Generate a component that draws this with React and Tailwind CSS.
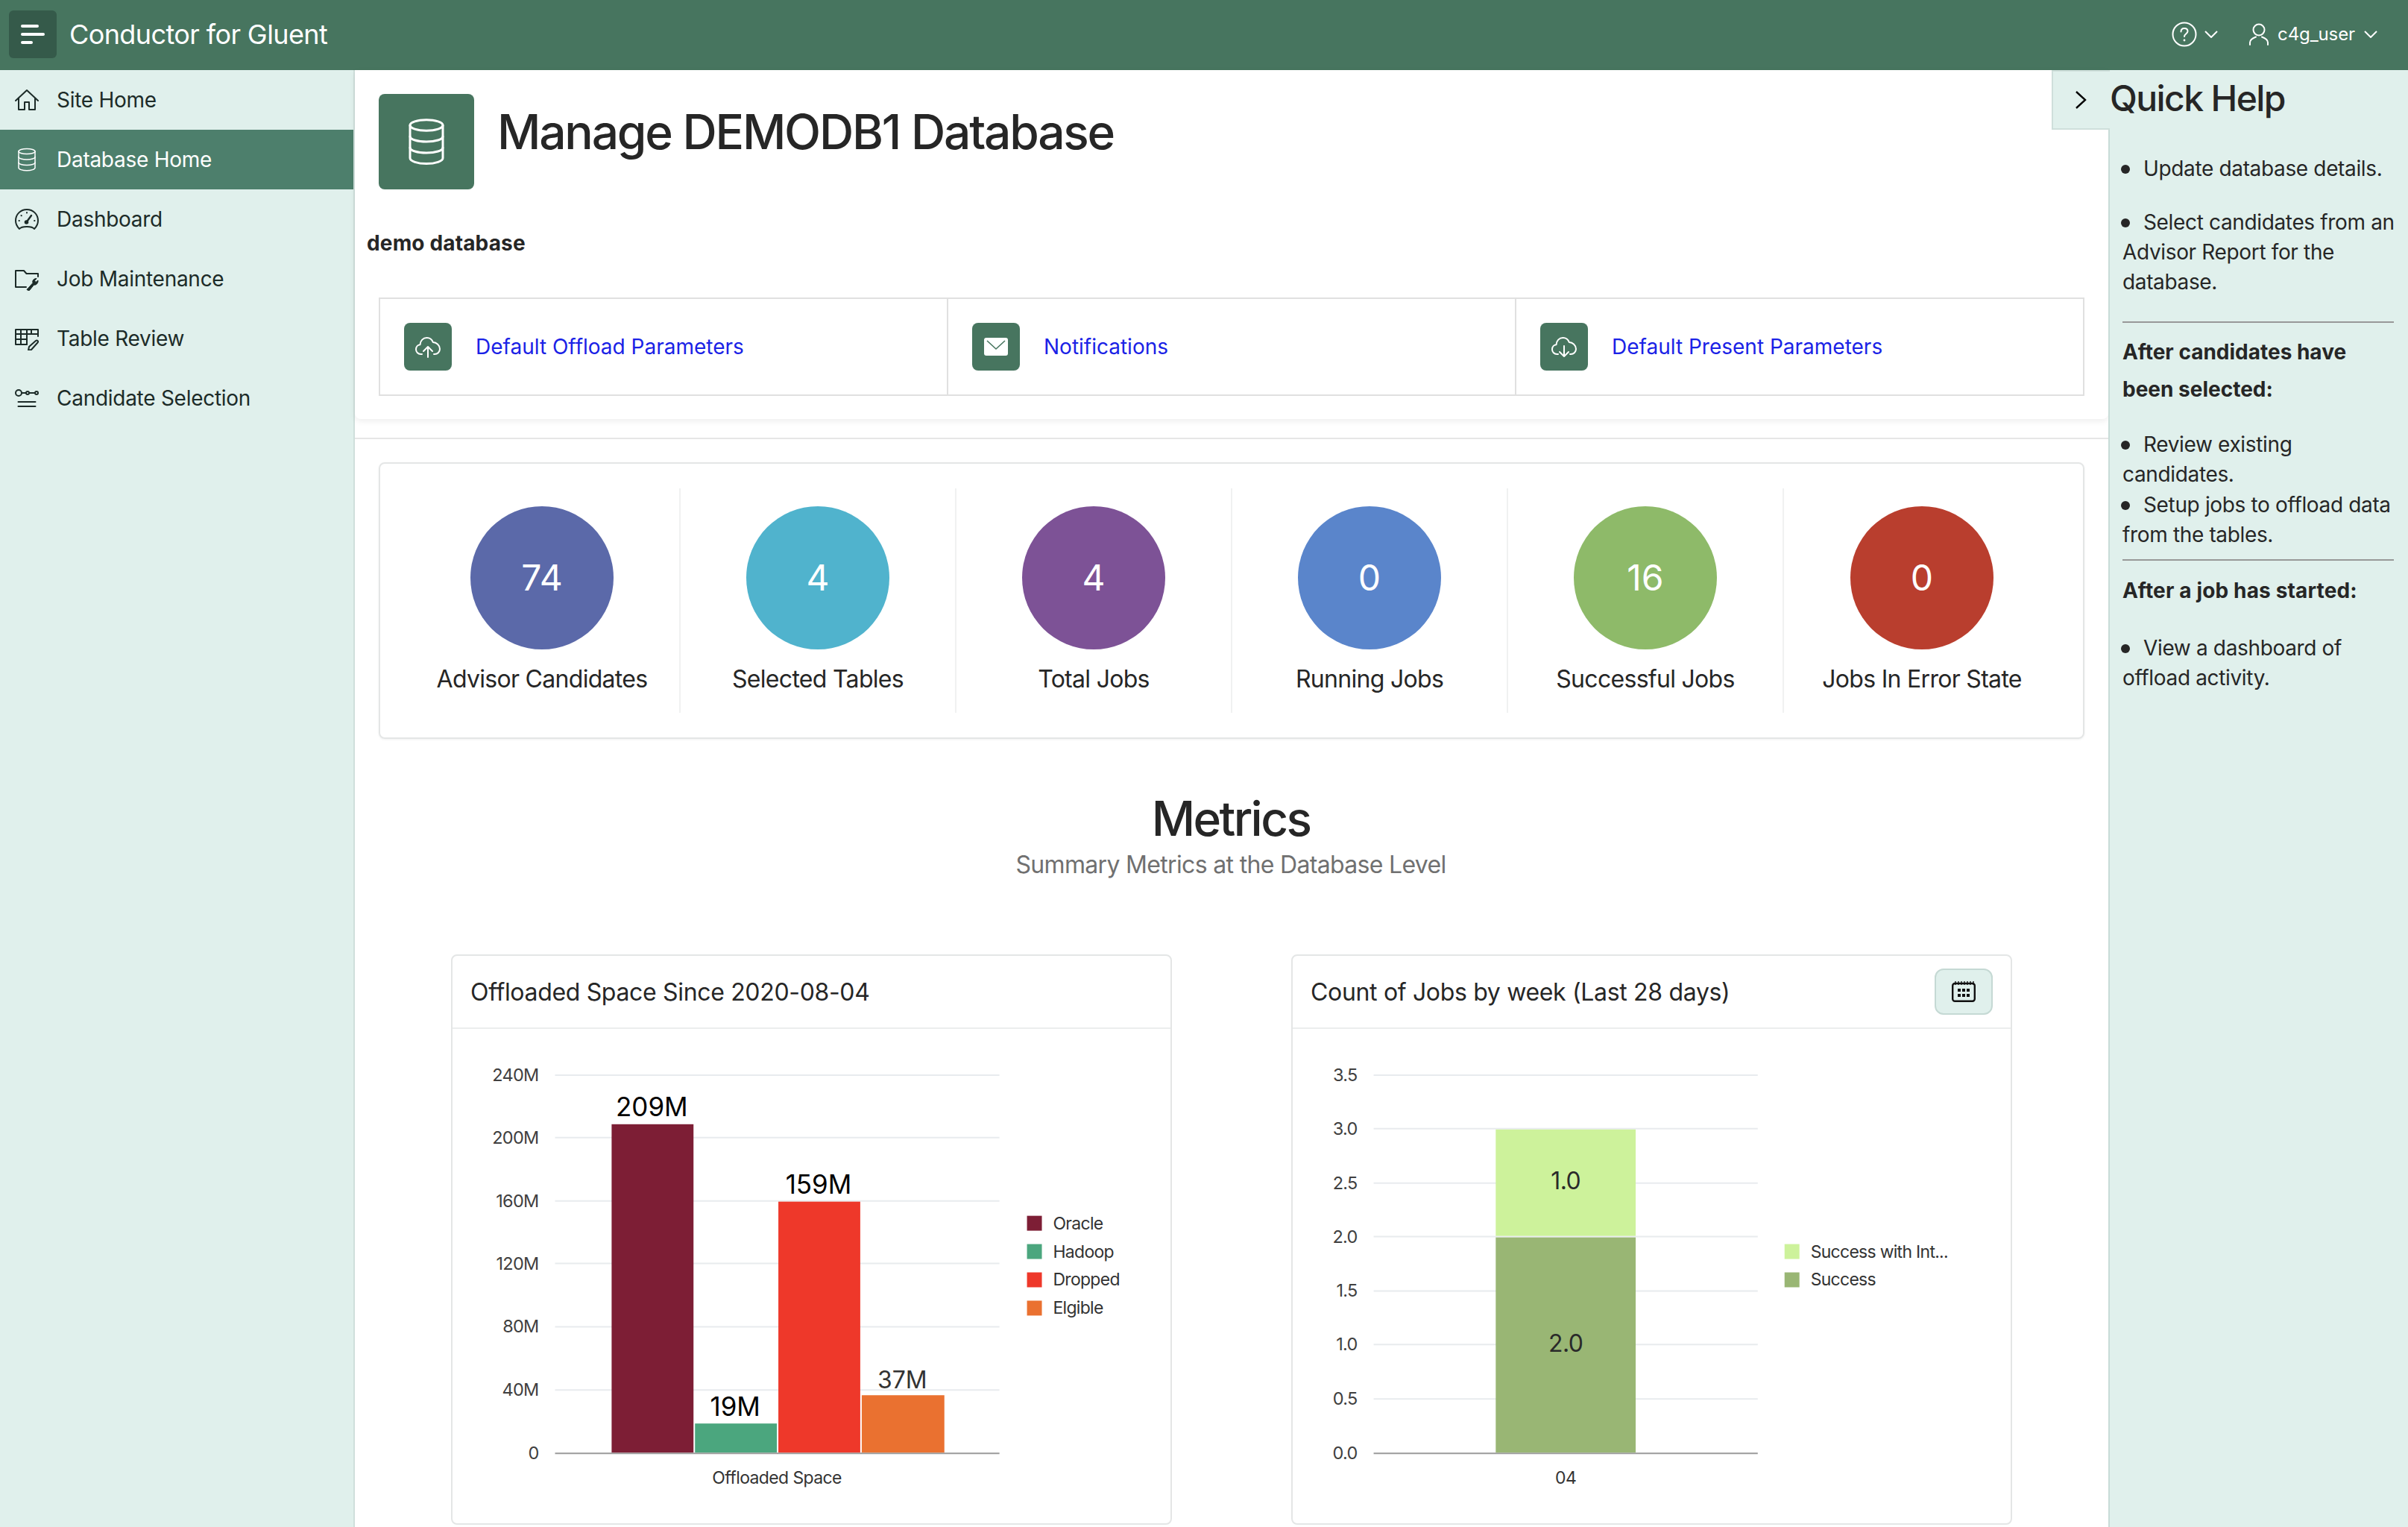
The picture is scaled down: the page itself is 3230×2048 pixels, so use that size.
import React from "react";

const S = ({ children, size = 32, w = 2 }) => (
  <svg width={size} height={size} viewBox="0 0 32 32" fill="none" stroke="currentColor" strokeWidth={w} strokeLinecap="round" strokeLinejoin="round">
    {children}
  </svg>
);

const HomeIcon = () => (
  <S><path d="M1 17 L16 3 L31 17" /><path d="M5 14 V29 H13 V19 H19 V29 H27 V14" /></S>
);
const DbShape = ({ width, height, w }) => (
  <svg width={width} height={height} viewBox="0 0 24 32" fill="none" stroke="currentColor" strokeWidth={w} strokeLinecap="round" strokeLinejoin="round">
    <ellipse cx="12" cy="5" rx="11" ry="3.6" />
    <path d="M1 5 V27 C1 29 6 30.8 12 30.8 C18 30.8 23 29 23 27 V5" />
    <path d="M1 12.5 C1 14.5 6 16 12 16 C18 16 23 14.5 23 12.5" />
    <path d="M1 20 C1 22 6 23.5 12 23.5 C18 23.5 23 22 23 20" />
  </svg>
);
const DbIcon = () => (
  <div className="w-8 h-8 flex items-center justify-center"><DbShape width={24} height={32} w={1.5} /></div>
);
const GaugeIcon = () => (
  <S>
    <path d="M6 29 C3 26 1 22 1 18 C1 9 8 3 16 3 C24 3 31 9 31 18 C31 22 29 26 26 29 C23 25 9 25 6 29 Z" />
    <path d="M15.5 20 L22 11" strokeWidth="2.4" />
    <circle cx="15.5" cy="20" r="1.8" fill="currentColor" />
    <path d="M16 7 V7.4 M5.5 18 H5.9 M26.5 18 H26.1 M8.5 11 L8.8 11.3" />
  </S>
);
const FolderWrenchIcon = () => (
  <S>
    <path d="M15 27 H1 V5 H12 L15.5 9 H31 V13" />
    <path d="M16.5 30 L24 21.5 C23 18 25.5 15.5 29 15.5 L26.5 18.5 L28 20.5 L31 18 C31.5 21.5 28.5 25 25.5 24 L19.5 31.5 C18 32 16 31.5 16.5 30 Z" fill="currentColor" strokeWidth="1" />
  </S>
);
const TableEditIcon = () => (
  <S>
    <path d="M16 24 H1 V4 H31 V13" />
    <path d="M1 10 H31 M1 17 H16 M8 4 V24 M16 4 V24 M22 4 V10" />
    <path d="M18 32 L19 27 L28 19 C30 17.5 32 20 30.5 21.5 L22 31 Z" />
  </S>
);
const SlidersIcon = () => (
  <S>
    <circle cx="5" cy="9" r="4" />
    <circle cx="17" cy="9" r="2" />
    <circle cx="29" cy="9" r="2" />
    <path d="M9 9 H15 M19 9 H27 M4.5 21 H27.5 M4.5 27 H27.5" />
  </S>
);
const CloudPath = () => (
  <path d="M9 25 H7.5 C3.5 25 1 22 1 18.5 C1 15 3.5 12.5 6.5 12.2 C6.8 7 10.5 3 15.5 3 C19.5 3 22.5 5.5 23.8 9 C28.5 9.2 33 13 33 18 C33 22 30 25 26 25 H25" strokeWidth="2" />
);
const CloudUp = () => (
  <svg width="34" height="30" viewBox="0 0 34 30" fill="none" stroke="currentColor" strokeWidth="2" strokeLinecap="round" strokeLinejoin="round">
    <CloudPath />
    <path d="M17 29 V15 M11 21 L17 15 L23 21" />
  </svg>
);
const CloudDown = () => (
  <svg width="34" height="30" viewBox="0 0 34 30" fill="none" stroke="currentColor" strokeWidth="2" strokeLinecap="round" strokeLinejoin="round">
    <CloudPath />
    <path d="M17 14 V28 M11 22 L17 28 L23 22" />
  </svg>
);
const MailIcon = () => (
  <div className="w-8 h-6 bg-white rounded-[3px] flex items-start justify-center">
    <svg width="32" height="24" viewBox="0 0 32 24" fill="none" stroke="#47755f" strokeWidth="1.6">
      <path d="M4 4 L16 15 L28 4" />
    </svg>
  </div>
);
const Chevron = ({ className = "" }) => (
  <svg width="18" height="10" viewBox="0 0 18 10" fill="none" stroke="currentColor" strokeWidth="2" className={className}>
    <path d="M1 1 L9 9 L17 1" />
  </svg>
);

const nav = [
  ["Site Home", HomeIcon, false],
  ["Database Home", DbIcon, true],
  ["Dashboard", GaugeIcon, false],
  ["Job Maintenance", FolderWrenchIcon, false],
  ["Table Review", TableEditIcon, false],
  ["Candidate Selection", SlidersIcon, false],
];

const stats = [
  ["74", "Advisor Candidates", "bg-[#5b69a9]"],
  ["4", "Selected Tables", "bg-[#50b3cd]"],
  ["4", "Total Jobs", "bg-[#7d5296]"],
  ["0", "Running Jobs", "bg-[#5a85cb]"],
  ["16", "Successful Jobs", "bg-[#8eba69]"],
  ["0", "Jobs In Error State", "bg-[#b93e2e]"],
];

const FONT = "Inter, sans-serif";

function Grid({ x1, x2, rows }) {
  return rows.map(([label, y], i) => (
    <g key={label}>
      <line x1={x1} x2={x2} y1={y} y2={y} stroke={i === rows.length - 1 ? "#9a9a9a" : "#e8ebee"} strokeWidth="2" />
      <text x={x1 - 22} y={y + 8} textAnchor="end" fontSize="23.5" letterSpacing="-0.7" fill="#404040" fontFamily={FONT}>{label}</text>
    </g>
  ));
}

function Legend({ x, items }) {
  return items.map(([label, color, y]) => (
    <g key={label}>
      <rect x={x} y={y - 9} width="20" height="20" fill={color} />
      <text x={x + 35} y={y + 9} fontSize="23" letterSpacing="-0.7" fill="#333" fontFamily={FONT}>{label}</text>
    </g>
  ));
}

function OffloadChart() {
  const ox = 607, oy = 1380;
  const bars = [
    [820, 930, 1508, "#7d1e35", "209M", 35, 1497, "#000"],
    [932, 1042, 1910, "#4ba67e", "19M", 35, 1900, "#000"],
    [1044, 1154, 1612, "#ee382a", "159M", 35, 1601, "#000"],
    [1156, 1267, 1872, "#ea7130", "37M", 32, 1863, "#333"],
  ];
  return (
    <svg width="963" height="664" viewBox={`${ox} ${oy} 963 664`}>
      <Grid x1={744} x2={1341} rows={[["240M", 1442], ["200M", 1526], ["160M", 1611], ["120M", 1695], ["80M", 1780], ["40M", 1865], ["0", 1950]]} />
      {bars.map(([a, b, top, fill, label, fs, ly, tc]) => (
        <g key={label}>
          <rect x={a} y={top} width={b - a} height={1949 - top} fill={fill} />
          <text x={(a + b) / 2 - 1} y={ly} textAnchor="middle" fontSize={fs} fill={tc} fontFamily={FONT}>{label}</text>
        </g>
      ))}
      <text x={1042} y={1991} textAnchor="middle" fontSize="23" letterSpacing="-0.6" fill="#333" fontFamily={FONT}>Offloaded Space</text>
      <Legend x={1378} items={[["Oracle", "#7d1e35", 1640], ["Hadoop", "#4ba67e", 1678], ["Dropped", "#ee382a", 1716], ["Elgible", "#ea7130", 1754]]} />
    </svg>
  );
}

function JobsChart() {
  const ox = 1734, oy = 1380;
  return (
    <svg width="963" height="664" viewBox={`${ox} ${oy} 963 664`}>
      <Grid x1={1842} x2={2358} rows={[["3.5", 1442], ["3.0", 1514], ["2.5", 1587], ["2.0", 1659], ["1.5", 1732], ["1.0", 1804], ["0.5", 1877], ["0.0", 1950]]} />
      <rect x="2006" y="1515" width="188" height="143" fill="#cdf29b" />
      <rect x="2006" y="1660" width="188" height="289" fill="#99b674" />
      <text x="2100" y="1595" textAnchor="middle" fontSize="32" letterSpacing="-0.5" fill="#2a2a2a" fontFamily={FONT}>1.0</text>
      <text x="2100" y="1814" textAnchor="middle" fontSize="32" letterSpacing="-0.5" fill="#2a2a2a" fontFamily={FONT}>2.0</text>
      <text x="2100" y="1991" textAnchor="middle" fontSize="23" letterSpacing="-0.6" fill="#333" fontFamily={FONT}>04</text>
      <Legend x={2394} items={[["Success with Int...", "#cdf29b", 1678], ["Success", "#99b674", 1716]]} />
    </svg>
  );
}

function ChartCard({ title, button, children }) {
  return (
    <div className="w-[967px] h-[765px] border-2 border-[#e4e6e6] rounded-lg bg-white flex flex-col overflow-hidden">
      <div className="h-[98px] shrink-0 border-b-2 border-[#eceeee] pl-[24px] pr-[24px] flex items-center justify-between">
        <span className="mt-[2px] text-[32px] text-[#262626] tracking-[-0.33px]">{title}</span>
        {button}
      </div>
      {children}
    </div>
  );
}

function LinkCell({ icon, label, last }) {
  return (
    <div className={`flex-1 flex items-center gap-8 pl-8 ${last ? "" : "border-r-2 border-[#e0e0e0]"}`}>
      <div className="w-16 h-16 rounded-lg bg-[#47755f] text-white flex items-center justify-center">{icon}</div>
      <span className="text-[28px] text-[#1a22e6]">{label}</span>
    </div>
  );
}

const Bullet = ({ children }) => (
  <li>
    <span className="inline-block w-3 h-3 rounded-full bg-[#262626] -ml-[2px] mr-[18px] align-[3px]" />
    {children}
  </li>
);

export default function App() {
  return (
    <div className="w-[3230px] h-[2048px] overflow-hidden flex flex-col bg-white" style={{ fontFamily: FONT }}>
      <header className="h-[94px] shrink-0 bg-[#47755f] text-white flex items-center pl-3 pr-[41px] pb-[2px]">
        <button className="w-16 h-16 rounded-md bg-[#355a4a] flex flex-col items-start justify-center gap-[7px] pl-4">
          <span className="w-6 h-[4px] bg-white rounded-sm" />
          <span className="w-8 h-[4px] bg-white rounded-sm" />
          <span className="w-4 h-[4px] bg-white rounded-sm" />
        </button>
        <span className="ml-[17px] text-[36px] font-normal tracking-[-0.6px]">Conductor for Gluent</span>
        <div className="ml-auto flex items-center">
          <svg width="34" height="34" viewBox="0 0 34 34" fill="none" stroke="currentColor" strokeWidth="2">
            <circle cx="17" cy="17" r="15.5" />
            <path d="M12.5 13.5 C12.5 10.5 14.5 9 17 9 C19.5 9 21.5 10.5 21.5 13 C21.5 16 17 16.5 17 20" strokeLinecap="round" />
            <circle cx="17" cy="25" r="1.4" fill="currentColor" stroke="none" />
          </svg>
          <Chevron className="ml-[10px]" />
          <svg className="ml-[42px]" width="26" height="30" viewBox="0 0 26 30" fill="none" stroke="currentColor" strokeWidth="2" strokeLinecap="round">
            <circle cx="13" cy="9" r="7.5" />
            <path d="M1 29 V26 C1 22 5 20 9 18.5 M25 29 V26 C25 22 21 20 17 18.5" />
          </svg>
          <span className="ml-3 text-[24px] tracking-[-0.1px]">c4g_user</span>
          <Chevron className="ml-3" />
        </div>
      </header>

      <div className="flex-1 flex min-h-0">
        <aside className="w-[476px] shrink-0 bg-[#e0f0ec] border-r-2 border-[#cfdfdb]">
          {nav.map(([label, Icon, active]) => (
            <div key={label} className={`h-20 flex items-center pl-5 gap-[24px] text-[28px] tracking-[-0.27px] ${active ? "bg-[#4d7f6c] text-white" : "text-[#1c2b28]"}`}>
              <Icon />
              <span>{label}</span>
            </div>
          ))}
        </aside>

        <main className="flex-1 min-w-0 bg-white">
          <section className="h-[468px] rounded-b-lg shadow-[0_3px_8px_rgba(0,0,0,0.07)] px-8 pt-8">
            <div className="flex items-start">
              <div className="w-32 h-32 rounded-lg bg-[#47755f] text-white flex items-center justify-center">
                <DbShape width={48} height={64} w={1.5} />
              </div>
              <h1 className="ml-[31px] mt-[13px] text-[64px] leading-[76px] font-medium tracking-[-2.2px] text-[#262626]">Manage DEMODB1 Database</h1>
            </div>
            <p className="-ml-4 mt-[54px] text-[28px] leading-[36px] font-bold tracking-[0.15px] text-[#262626]">demo database</p>
            <div className="mt-[55px] w-[2288px] h-[132px] border-2 border-[#e0e0e0] flex">
              <LinkCell icon={<CloudUp />} label="Default Offload Parameters" />
              <LinkCell icon={<MailIcon />} label="Notifications" />
              <LinkCell icon={<CloudDown />} label="Default Present Parameters" last />
            </div>
          </section>

          <section className="mt-[25px] border-t-2 border-[#e6e6e6] px-8 pt-[31px]">
            <div className="w-[2288px] h-[371px] border-2 border-[#e4e6e6] rounded-lg shadow-[0_1px_3px_rgba(0,0,0,0.06)] grid grid-cols-6 pl-[33px] pr-[31px] py-[33px]">
              {stats.map(([n, label, bg], i) => (
                <div key={label} className={`flex flex-col items-center pt-6 ${i < 5 ? "border-r-2 border-[#f0f1f1]" : ""}`}>
                  <div className={`w-[192px] h-[192px] rounded-full ${bg} text-white text-[48px] flex items-center justify-center`}>{n}</div>
                  <span className="mt-[20px] text-[32px] leading-[40px] tracking-[-0.7px] text-[#262626]">{label}</span>
                </div>
              ))}
            </div>

            <div className="mt-[69px] text-center w-[2286px]">
              <h2 className="text-[64px] leading-[76px] font-medium tracking-[-2.6px] text-[#262626]">Metrics</h2>
              <p className="mt-[4px] text-[32px] leading-[40px] tracking-[-0.67px] text-[#707070]">Summary Metrics at the Database Level</p>
            </div>

            <div className="mt-[100px] ml-[97px] flex gap-[160px]">
              <ChartCard title="Offloaded Space Since 2020-08-04"><OffloadChart /></ChartCard>
              <ChartCard
                title="Count of Jobs by week (Last 28 days)"
                button={
                  <button className="w-[78px] h-[62px] rounded-xl border-2 border-[#c5d9d4] bg-[#e0f0ec] flex items-center justify-center text-[#111]">
                    <svg width="32" height="28" viewBox="0 0 32 28" fill="none" stroke="currentColor" strokeWidth="2.4">
                      <rect x="1.2" y="3" width="29.6" height="23.8" rx="3" />
                      <path d="M5 0 V5 M9 0 V5 M13 0 V5 M17 0 V5 M21 0 V5 M25 0 V5 M29 0 V5" strokeWidth="1.4" />
                      <path d="M8 12 H12 M14 12 H18 M20 12 H24 M8 19 H12 M14 19 H18 M20 19 H24" strokeWidth="4" />
                    </svg>
                  </button>
                }
              >
                <JobsChart />
              </ChartCard>
            </div>
          </section>
        </main>

        <aside className="relative w-[402px] shrink-0 bg-[#e0f0ec] border-l-2 border-[#c8dcd8] pl-[17px] pr-[12px] text-[28px] leading-[40px] tracking-[-0.35px] text-[#262626]">
          <div className="absolute right-full top-0 w-[78px] h-20 bg-[#e0f0ec] border-l-2 border-t-2 border-b-2 border-[#cfdfdb] flex items-center justify-center pr-[2px]">
            <svg width="16" height="24" viewBox="0 0 16 24" fill="none" stroke="#000" strokeWidth="2.4"><path d="M2 1 L14 12 L2 23" /></svg>
          </div>
          <h2 className="-ml-[17px] mt-[9px] text-[48px] leading-[58px] font-medium tracking-[-1.6px]">Quick Help</h2>
          <ul className="mt-[45px]"><Bullet>Update database details.</Bullet></ul>
          <ul className="mt-[32px]"><Bullet>Select candidates from an Advisor Report for the database.</Bullet></ul>
          <hr className="mt-[33px] mr-[7px] border-t-2 border-[#989898]" />
          <p className="mt-[14px] max-w-[340px] font-bold leading-[50px] tracking-normal">After candidates have been selected:</p>
          <ul className="mt-[29px]">
            <Bullet>Review existing candidates.</Bullet>
            <li className="mt-[1px]">
              <span className="inline-block w-3 h-3 rounded-full bg-[#262626] -ml-[2px] mr-[18px] align-[3px]" />
              Setup jobs to offload data from the tables.
            </li>
          </ul>
          <hr className="mt-[13px] mr-[7px] border-t-2 border-[#989898]" />
          <p className="mt-[20px] font-bold tracking-[0.15px]">After a job has started:</p>
          <ul className="mt-[37px]"><Bullet>View a dashboard of offload activity.</Bullet></ul>
        </aside>
      </div>
    </div>
  );
}
